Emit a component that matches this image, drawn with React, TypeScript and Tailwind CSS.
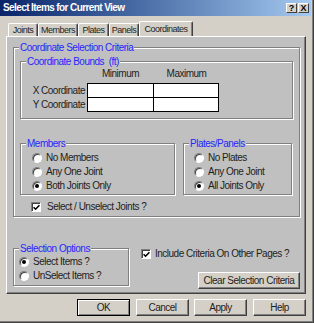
import React from "react";

type Kids = { children?: React.ReactNode; className?: string };

function Group({ label, className = "", children }: Kids & { label: string }) {
  return (
    <div className={`flex flex-col border border-[#808080] shadow-[1px_1px_0_#fff,inset_1px_1px_0_#fff] ${className}`}>
      <div className="-mt-[6px] ml-[5px] w-fit bg-[#c0c0c0] px-px leading-[11px] text-[#2626ff]">{label}</div>
      {children}
    </div>
  );
}

function Radio({ label, checked = false }: { label: string; checked?: boolean }) {
  return (
    <div className="flex h-[14px] items-center gap-[4px]">
      <span className="flex h-[10px] w-[10px] items-center justify-center rounded-full border border-t-[#808080] border-l-[#808080] border-r-white border-b-white bg-white shadow-[inset_1px_1px_0_#404040]">
        {checked && <span className="h-[4px] w-[4px] rounded-full bg-black" />}
      </span>
      <span>{label}</span>
    </div>
  );
}

function Check({ label, className = "" }: { label: string; className?: string }) {
  return (
    <div className={`flex h-[12px] items-center ${className}`}>
      <span className="flex h-[10px] w-[10px] items-center justify-center border border-t-[#808080] border-l-[#808080] border-r-white border-b-white bg-white shadow-[inset_1px_1px_0_#404040]">
        <svg width="7" height="7" viewBox="0 0 7 7">
          <polyline points="0.6,3.2 2.6,5.2 6.4,1.2" fill="none" stroke="#000" strokeWidth="1.6" />
        </svg>
      </span>
      <span>{label}</span>
    </div>
  );
}

function Btn({ children, def = false, className = "" }: Kids & { def?: boolean }) {
  const edge = def
    ? "border border-black shadow-[inset_1px_1px_0_#fff,inset_-1px_-1px_0_#808080]"
    : "border border-t-white border-l-white border-r-[#404040] border-b-[#404040] shadow-[inset_-1px_-1px_0_#808080]";
  return (
    <div className={`flex h-[17px] items-center justify-center bg-[#d4d0c8] ${edge} ${className}`}>{children}</div>
  );
}

function Tab({ children, w, active = false }: Kids & { w: string; active?: boolean }) {
  return (
    <div
      className={`flex items-center justify-center rounded-t-[2px] border-t border-l border-t-white border-l-white border-r border-r-[#404040] shadow-[inset_-1px_0_0_#808080] bg-[#d4d0c8] ${w} ${
        active ? "h-[15px] pb-[1px]" : "h-[13px]"
      }`}
    >
      {children}
    </div>
  );
}

export default function App() {
  return (
    <div className="flex h-[323px] w-[314px] flex-col border-r border-b border-[#404040] bg-[#d4d0c8] font-['Liberation_Sans',Arial,sans-serif] text-[10px] leading-[12px] tracking-[-0.5px] text-[#1e1e1e] shadow-[inset_-1px_-1px_0_#808080]">
      {/* title bar */}
      <div className="mr-[2px] flex h-[16px] items-center justify-between bg-gradient-to-r from-[#0a246a] to-[#a6caf0] pl-[3px] pr-[2px]">
        <span className="font-bold tracking-[-0.6px] text-white">Select Items for Current View</span>
        <div className="flex gap-[1px] text-black">
          <div className="flex h-[10px] w-[11px] items-center justify-center border border-t-white border-l-white border-r-[#404040] border-b-[#404040] bg-[#d4d0c8] text-[9px] font-bold leading-none tracking-normal">?</div>
          <div className="flex h-[10px] w-[11px] items-center justify-center border border-t-white border-l-white border-r-[#404040] border-b-[#404040] bg-[#d4d0c8] text-[9px] font-bold leading-none tracking-normal">X</div>
        </div>
      </div>

      {/* tabs */}
      <div className="flex h-[20px] items-end pl-[8px] text-[9px] tracking-[-0.5px]">
        <Tab w="w-[30px]">Joints</Tab>
        <Tab w="w-[40px]">Members</Tab>
        <Tab w="w-[31px]">Plates</Tab>
        <Tab w="w-[30px]">Panels</Tab>
        <Tab w="w-[54px]" active>
          Coordinates
        </Tab>
      </div>

      {/* tab page */}
      <div className="ml-[6px] flex h-[258px] w-[300px] flex-col border-t border-l border-t-white border-l-white border-r border-b border-r-[#404040] border-b-[#404040] bg-[#c0c0c0] shadow-[inset_-1px_-1px_0_#808080]">
        <Group label="Coordinate Selection Criteria" className="mt-[10px] ml-[6px] h-[170px] w-[287px]">
          <Group label={"Coordinate Bounds\u00a0 (ft)"} className="mt-[8px] ml-[6px] h-[58px] w-[273px]">
            <div className="mt-px flex h-[11px] pl-[66px] leading-[11px]">
              <span className="w-[67px] text-center">Minimum</span>
              <span className="w-[65px] text-center">Maximum</span>
            </div>
            <div className="mt-[4px] flex">
              <div className="flex w-[66px] flex-col gap-px pt-px">
                <span className="h-[13px] pr-[2px] text-right leading-[13px]">X Coordinate</span>
                <span className="h-[13px] pr-[2px] text-right leading-[13px]">Y Coordinate</span>
              </div>
              <div className="grid grid-cols-[65px_64px] gap-px bg-black p-px">
                <div className="h-[13px] bg-white" />
                <div className="h-[13px] bg-white" />
                <div className="h-[13px] bg-white" />
                <div className="h-[13px] bg-white" />
              </div>
            </div>
          </Group>

          <div className="mt-[24px] ml-[6px] flex gap-[8px]">
            <Group label="Members" className="h-[52px] w-[155px]">
              <div className="mt-[2px] ml-[11px] flex flex-col">
                <Radio label="No Members" />
                <Radio label="Any One Joint" />
                <Radio label="Both Joints Only" checked />
              </div>
            </Group>
            <Group label="Plates/Panels" className="h-[52px] w-[109px]">
              <div className="mt-[2px] ml-[10px] flex flex-col">
                <Radio label="No Plates" />
                <Radio label="Any One Joint" />
                <Radio label="All Joints Only" checked />
              </div>
            </Group>
          </div>

          <Check label="Select / Unselect Joints ?" className="mt-[6px] ml-[17px] gap-[6px]" />
        </Group>

        <div className="flex">
          <Group label="Selection Options" className="mt-[31px] ml-[6px] h-[38px] w-[116px]">
            <div className="mt-px ml-[5px] flex flex-col">
              <Radio label="Select Items ?" checked />
              <Radio label="UnSelect Items ?" />
            </div>
          </Group>
          <div className="ml-[12px] flex flex-1 flex-col">
            <Check label="Include Criteria On Other Pages ?" className="mt-[31px] gap-[4px]" />
            <Btn className="mt-[12px] mr-[5px] w-[102px] self-end">Clear Selection Criteria</Btn>
          </div>
        </div>
      </div>

      {/* dialog buttons */}
      <div className="mt-[5px] flex pl-[77px]">
        <Btn def className="w-[53px]">
          OK
        </Btn>
        <Btn className="ml-[6px] w-[53px]">Cancel</Btn>
        <Btn className="ml-[5px] w-[53px]">Apply</Btn>
        <Btn className="ml-[6px] w-[53px]">Help</Btn>
      </div>
    </div>
  );
}
